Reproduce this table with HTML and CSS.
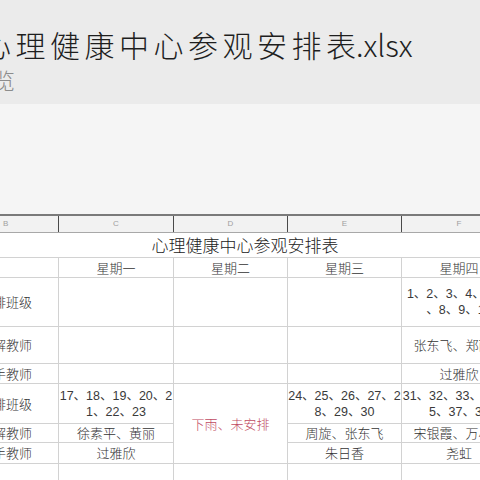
FILE: index.html
```html
<!DOCTYPE html>
<html lang="zh-CN">
<head>
<meta charset="utf-8">
<title>心理健康中心参观安排表.xlsx</title>
<link rel="stylesheet" href="styles.css">
</head>
<body>
<div class="page">
  <header class="doc-head">
    <h1 class="doc-title"><span class="spaced">心理健康中心参观安排</span>表.xlsx</h1>
    <div class="doc-sub">预览</div>
  </header>
  <div class="canvas"></div>
  <div class="colhead">
    <div class="ch ch-b">B</div>
    <div class="ch">C</div>
    <div class="ch">D</div>
    <div class="ch">E</div>
    <div class="ch">F</div>
  </div>
  <div class="sheet">
    <div class="cell title">心理健康中心参观安排表</div>

    <div class="cell"></div>
    <div class="cell">星期一</div>
    <div class="cell">星期二</div>
    <div class="cell">星期三</div>
    <div class="cell">星期四</div>

    <div class="cell label">安排班级</div>
    <div class="cell"></div>
    <div class="cell"></div>
    <div class="cell"></div>
    <div class="cell num">1、2、3、4、5、6<br>、8、9、10</div>

    <div class="cell label">讲解教师</div>
    <div class="cell"></div>
    <div class="cell"></div>
    <div class="cell"></div>
    <div class="cell">张东飞、郑丽雯</div>

    <div class="cell label">助手教师</div>
    <div class="cell"></div>
    <div class="cell"></div>
    <div class="cell"></div>
    <div class="cell">过雅欣</div>

    <div class="cell label">安排班级</div>
    <div class="cell num">17、18、19、20、2<br>1、22、23</div>
    <div class="cell rain">下雨、未安排</div>
    <div class="cell num">24、25、26、27、2<br>8、29、30</div>
    <div class="cell num">31、32、33、34、3<br>5、37、38</div>

    <div class="cell label">讲解教师</div>
    <div class="cell">徐素平、黄丽</div>
    <div class="cell">周旋、张东飞</div>
    <div class="cell">宋银霞、万小红</div>

    <div class="cell label">助手教师</div>
    <div class="cell">过雅欣</div>
    <div class="cell">朱日香</div>
    <div class="cell">尧虹</div>

    <div class="cell"></div>
    <div class="cell"></div>
    <div class="cell"></div>
    <div class="cell"></div>
    <div class="cell"></div>
  </div>
</div>
</body>
</html>
```

FILE: styles.css
```css
html, body {
  margin: 0;
  padding: 0;
  background: #f5f5f5;
}
body {
  width: 480px;
  height: 480px;
  overflow: hidden;
  font-family: "Noto Sans CJK SC", "Noto Sans", sans-serif;
}
.page {
  width: 480px;
}
.doc-head {
  height: 104px;
  background: #ebebeb;
  box-sizing: border-box;
  padding-top: 29px;
}
.doc-title {
  margin: 0 0 0 -19px;
  font-size: 30px;
  line-height: 30px;
  font-weight: 300;
  color: #1e1e1e;
  white-space: nowrap;
}
.doc-title .spaced {
  letter-spacing: 4.5px;
}
.doc-sub {
  margin: 9px 0 0 -29px;
  font-size: 22px;
  line-height: 22px;
  font-weight: 300;
  color: #8c8c8c;
  white-space: nowrap;
}
.canvas {
  height: 110px;
  background: #f5f5f5;
}
.colhead {
  display: grid;
  grid-template-columns: 58px 114px 113px 113px 114px;
  column-gap: 1px;
  width: 516px;
  background: #4a4a4a;
  border-top: 2px solid #7a7a7a;
  border-bottom: 1px solid #a8a8a8;
}
.ch {
  height: 16px;
  background: #f2f2f2;
  font-family: "Liberation Sans", sans-serif;
  font-size: 8px;
  line-height: 16px;
  color: #a0a0a0;
  text-align: center;
}
.ch-b {
  text-align: left;
  padding-left: 3px;
}
.sheet {
  display: grid;
  grid-template-columns: 58px 114px 113px 113px 114px;
  grid-template-rows: 24px 19px 48px 36px 19px 39px 18px 20px 20px;
  gap: 1px;
  width: 516px;
  background: #d2d2d2;
}
.cell {
  background: #ffffff;
  display: flex;
  align-items: center;
  justify-content: center;
  text-align: center;
  white-space: nowrap;
  font-size: 13px;
  line-height: 16px;
  font-weight: 300;
  color: #333333;
  overflow: hidden;
}
.title {
  grid-column: 1 / -1;
  font-size: 17px;
  color: #222222;
  padding-right: 26px;
}
.label {
  justify-content: flex-end;
  padding-right: 26px;
}
.num {
  font-family: "Liberation Sans", "Noto Sans CJK SC", sans-serif;
  font-size: 12.5px;
  font-weight: 400;
  color: #3a3a3a;
}
.rain {
  grid-column: 3;
  grid-row: 6 / 9;
  color: #bf4a62;
}
```
